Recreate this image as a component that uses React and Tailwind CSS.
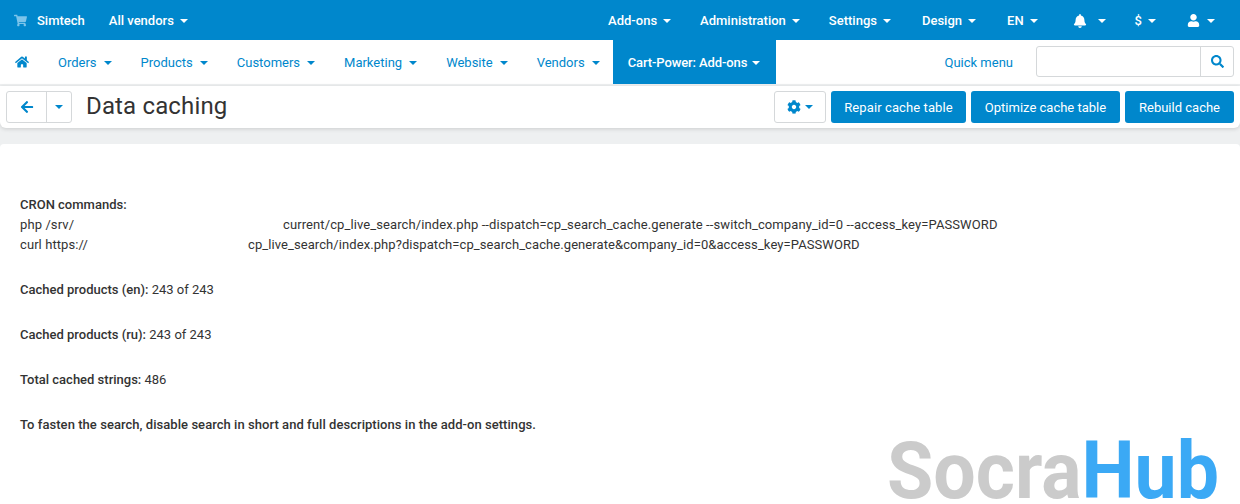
import React from 'react';
import { FaShoppingCart, FaHome, FaArrowLeft, FaCog, FaBell, FaUser, FaSearch } from 'react-icons/fa';

function Caret({ className = '' }) {
  return <span className={`inline-block w-0 h-0 border-x-[4px] border-x-transparent border-t-[4px] border-t-current ${className}`} />;
}

const topRight = [
  ['Add-ons', 'ml-0'],
  ['Administration', 'ml-[29px]'],
  ['Settings', 'ml-[29px]'],
  ['Design', 'ml-[31px]'],
  ['EN', 'ml-[31px]'],
];

const mainNav = ['Orders', 'Products', 'Customers', 'Marketing', 'Website', 'Vendors'];

function App() {
  return (
    <div className="relative w-[1240px] h-[504px] overflow-hidden bg-[#eef0f1] font-['Roboto',sans-serif] text-[13px] text-[#333]">
      {/* TOP BAR */}
      <div className="h-10 bg-[#0087cc] flex items-center text-white font-medium pl-[14px] pr-[25px] pt-[1px]">
        <FaShoppingCart className="text-[13px] text-[#7cc4ea]" />
        <span className="ml-[10px]">Simtech</span>
        <span className="ml-[24px] flex items-center">All vendors<Caret className="ml-[6px]" /></span>
        <div className="ml-auto flex items-center">
          {topRight.map(([label, gap]) => (
            <span key={label} className={`flex items-center ${gap}`}>{label}<Caret className="ml-[6px]" /></span>
          ))}
          <span className="ml-[35px] flex items-center"><FaBell className="text-[14px]" /><Caret className="ml-[11px]" /></span>
          <span className="ml-[29px] flex items-center">$<Caret className="ml-[6px]" /></span>
          <span className="ml-[31px] flex items-center"><FaUser className="text-[13px]" /><Caret className="ml-[7px]" /></span>
        </div>
      </div>

      {/* MAIN NAV */}
      <div className="h-[44px] bg-white flex items-start text-[#0087cc] text-[13px]">
        <div className="h-[44px] flex items-center pl-[15px]">
          <FaHome className="text-[14px]" />
        </div>
        <div className="h-[44px] flex items-center ml-[29px] pt-[1px]">
          {mainNav.map((label) => (
            <span key={label} className="flex items-center mr-[29px]">{label}<Caret className="ml-[7px]" /></span>
          ))}
        </div>
        <div className="h-[44px] -ml-[16px] pl-[15px] pr-[16px] bg-[#0087cc] text-white font-medium flex items-center pt-[1px] tracking-[-0.1px]">
          Cart-Power: Add-ons<Caret className="ml-[5px]" />
        </div>
        <span className="ml-auto h-[44px] flex items-center pt-[1px]">Quick menu</span>
        <div className="ml-[23px] mr-[6px] mt-[6px] w-[198px] h-[31px] flex border border-[#d5d8da] rounded-[3px]">
          <div className="flex-1 border-r border-[#d5d8da]" />
          <div className="w-[32px] flex items-center justify-center"><FaSearch className="text-[13px]" /></div>
        </div>
      </div>

      {/* TOOLBAR */}
      <div className="mt-[2px] h-[42px] bg-white rounded-b-[6px] shadow-[0_1px_4px_rgba(0,0,0,0.15)] flex items-start pl-[6px] pr-[6px] pt-[5px]">
        <div className="h-[32px] flex border border-[#d5d8da] rounded-[3px] text-[#0087cc]">
          <div className="w-[40px] flex items-center justify-center border-r border-[#d5d8da]"><FaArrowLeft className="text-[14px]" /></div>
          <div className="w-[24px] flex items-center justify-center"><Caret /></div>
        </div>
        <h1 className="ml-[14px] -mt-[1px] text-[24px] leading-[32px] tracking-[0.15px] text-[#333]">Data caching</h1>
        <div className="ml-auto flex gap-[5px] text-white text-[13px]">
          <div className="w-[52px] h-[32px] flex items-center justify-center border border-[#d5d8da] rounded-[3px] text-[#0087cc]">
            <FaCog className="text-[14px]" /><Caret className="ml-[4px]" />
          </div>
          <button className="h-[32px] w-[135px] bg-[#0087cc] rounded-[3px] pt-[1px] tracking-[0.1px]">Repair cache table</button>
          <button className="h-[32px] w-[149px] bg-[#0087cc] rounded-[3px] pt-[1px]">Optimize cache table</button>
          <button className="h-[32px] w-[109px] bg-[#0087cc] rounded-[3px] pt-[1px]">Rebuild cache</button>
        </div>
      </div>

      {/* CONTENT */}
      <div className="mt-[16px] h-[360px] bg-white rounded-t-[4px] pl-[20px] pt-[51px] leading-[20px]">
        <p className="font-medium">CRON commands:</p>
        <p className="flex tracking-[0.1px]"><span className="w-[263px]">php /srv/</span><span>current/cp_live_search/index.php --dispatch=cp_search_cache.generate --switch_company_id=0 --access_key=PASSWORD</span></p>
        <p className="flex tracking-[0.08px]"><span className="w-[228px]">curl https://</span><span>cp_live_search/index.php?dispatch=cp_search_cache.generate&amp;company_id=0&amp;access_key=PASSWORD</span></p>
        <p className="mt-[25px]"><span className="font-medium">Cached products (en):</span> 243 of 243</p>
        <p className="mt-[25px]"><span className="font-medium">Cached products (ru):</span> 243 of 243</p>
        <p className="mt-[25px]"><span className="font-medium">Total cached strings:</span> 486</p>
        <p className="mt-[25px] font-medium tracking-[0.05px]">To fasten the search, disable search in short and full descriptions in the add-on settings.</p>
      </div>

      {/* WATERMARK */}
      <div className="absolute left-[887px] top-[438px] origin-left scale-x-[0.94] text-[80px] leading-[66px] font-bold font-['Roboto',sans-serif] whitespace-nowrap">
        <span className="text-[#cbcbcb]">Socra</span><span className="text-[#3ba9f5]">Hub</span>
      </div>
    </div>
  );
}

export default App;
